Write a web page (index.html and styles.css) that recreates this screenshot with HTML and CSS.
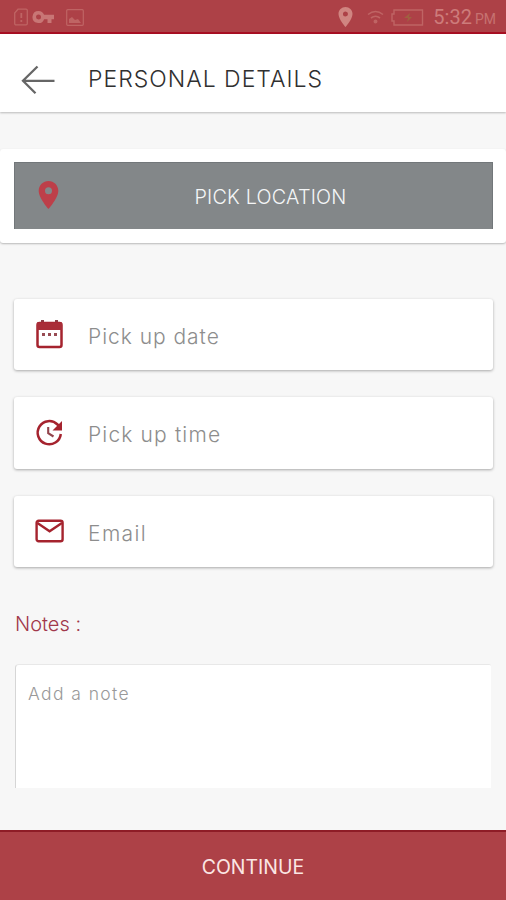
FILE: index.html
```html
<!DOCTYPE html>
<html lang="en">
<head>
<meta charset="utf-8">
<title>Personal details</title>
<link rel="stylesheet" href="styles.css">
</head>
<body>
<div class="statusbar">
  <svg class="sb-sim" width="14" height="18" viewBox="0 0 14 18" fill="none" stroke="currentColor" stroke-width="1.3"><path d="M4 1.2h8a1.3 1.3 0 0 1 1.300 1.300v13a1.300 1.300 0 0 1-1.300 1.300H2a1.300 1.300 0 0 1-1.300-1.300V5z"/><path d="M7.300 5v5M7.300 12v2" stroke-width="1.800"/></svg>
  <svg class="sb-key" width="23" height="14" viewBox="0 0 23 14" fill="currentColor"><path fill-rule="evenodd" d="M6.500 1a6 6 0 1 0 5.600 8.200h3.400V13h4V9.200H22V4.800h-9.900A6 6 0 0 0 6.500 1zm0 3.500a2.500 2.500 0 1 1 0 5 2.500 2.500 0 0 1 0-5z"/></svg>
  <svg class="sb-image" width="18" height="17" viewBox="0 0 18 17"><rect x=".7" y=".7" width="16.600" height="15.600" rx="1" fill="none" stroke="currentColor" stroke-width="1.200"/><path d="M3 14v-4l3-2 3 3 3-1 3 4z" fill="currentColor"/></svg>
  <svg class="sb-pin" width="15" height="20" viewBox="5 2 14 20"><path fill="currentColor" d="M12 2C8.130 2 5 5.130 5 9c0 5.250 7 13 7 13s7-7.750 7-13c0-3.870-3.130-7-7-7zm0 9.500a2.500 2.500 0 1 1 0-5 2.500 2.500 0 0 1 0 5z"/></svg>
  <svg class="sb-wifi" width="17" height="14" viewBox="0 0 17 14" fill="none" stroke="currentColor" stroke-width="1.600"><path d="M1 4.500q7.500-6 15 0M4 8q4.500-3.500 9 0"/><circle cx="8.500" cy="11.500" r="1.200" fill="currentColor"/></svg>
  <svg class="sb-battery" width="33" height="17" viewBox="0 0 33 17"><path d="M3 1h28.500v15H3v-4H1V5h2z" fill="none" stroke="currentColor" stroke-width="1.400"/><path class="bolt" d="M19 4l-6 5h4l-1 4 5-5h-3z"/></svg>
  <span class="clock">5:32</span><span class="meridiem">PM</span>
</div>
<header class="appbar">
  <svg class="back" width="34" height="30" viewBox="0 0 34 30" fill="none" stroke="#666" stroke-width="2.300"><path d="M33.500 15.800H2M16.500 1.500L2 15.800l12.500 12.500"/></svg>
  <h1>PERSONAL DETAILS</h1>
</header>
<section class="location">
  <button class="pick">
    <svg class="pin" width="21" height="28" viewBox="5 2 14 20"><path fill="#bd3f49" d="M12 2C8.130 2 5 5.130 5 9c0 5.250 7 13 7 13s7-7.750 7-13c0-3.870-3.130-7-7-7zm0 9.500a2.500 2.500 0 1 1 0-5 2.500 2.500 0 0 1 0 5z"/></svg>
    <span>PICK LOCATION</span>
  </button>
</section>
<main class="fields">
  <div class="field">
    <svg width="30" height="30" viewBox="0 0 30 30"><path d="M8.500 0v4M22.500 0v4" stroke="#8b4049" stroke-width="3"/><rect x="3.500" y="3" width="24" height="24" rx="2" fill="none" stroke="#a5232e" stroke-width="2.500"/><path d="M3 2.500h25v7.500H3z" fill="#a92d38"/><path d="M8 13h3v3H8zM14 13h3v3h-3zM20 13h3v3h-3z" fill="#984b53"/></svg>
    <span class="t-date">Pick up date</span>
  </div>
  <div class="field">
    <svg width="30" height="30" viewBox="0 0 30 30" fill="none" stroke="#a5232e" stroke-width="2.500"><path d="M26.800 16A11.600 11.600 0 1 1 23.500 6.500l2 2"/><path d="M28 3v9.500h-9.500z" fill="#a5232e" stroke="none"/><path d="M14.200 9v6.200l5.300 3.300" stroke="#93444c" stroke-width="2.100"/></svg>
    <span class="t-time">Pick up time</span>
  </div>
  <div class="field">
    <svg width="30" height="30" viewBox="0 0 30 30" fill="none" stroke="#a5232e" stroke-width="2.400"><rect x="2.600" y="4.700" width="26" height="20.500" rx="2"/><path d="M3.400 7l12.200 8.200L27.900 7"/></svg>
    <span class="t-email">Email</span>
  </div>
</main>
<section class="notes">
  <h2>Notes :</h2>
  <div class="note"><span>Add a note</span></div>
</section>
<footer class="continue"><span>CONTINUE</span></footer>
</body>
</html>
```
FILE: styles.css
```css
* { box-sizing: border-box; }
body {
  margin: 0;
  width: 506px;
  height: 900px;
  display: flex;
  flex-direction: column;
  overflow: hidden;
  background: #f7f7f7;
  font-family: Inter, "Open Sans", sans-serif;
  font-weight: 300;
}
span, h1, h2 { white-space: nowrap; }
.statusbar {
  height: 34px;
  flex: none;
  display: flex;
  align-items: center;
  padding: 2px 10px 0 14px;
  background: #ad4147;
  border-bottom: 2px solid #a80f22;
  color: #bf6464;
}
.sb-key { margin-left: 4px; color: #c87675; }
.sb-image { margin-left: 11px; }
.sb-pin { margin-left: auto; color: #d08581; }
.sb-wifi { margin-left: 14px; }
.sb-battery { margin-left: 7px; }
.bolt { fill: #a06040; }
.clock { margin-left: 9px; font: 400 20px Roboto, sans-serif; color: #cd7c7b; }
.meridiem { margin: 4px 0 0 3px; font: 400 14px Roboto, sans-serif; color: #c67271; }
.appbar {
  height: 78px;
  flex: none;
  display: flex;
  align-items: center;
  padding: 12px 21px 0;
  background: #fff;
  box-shadow: 0 1px 2px rgba(0,0,0,.25);
}
.back { position: relative; top: 1px; }
h1 { margin: 0 0 0 33px; font-size: 23px; font-weight: 300; letter-spacing: 1px; color: #303030; }
.location {
  height: 94px;
  flex: none;
  margin-top: 37px;
  padding: 13px 13px 14px 14px;
  background: #fff;
  border-radius: 3px;
  box-shadow: 0 1px 2px rgba(0,0,0,.25);
}
.pick {
  width: 100%;
  height: 67px;
  display: grid;
  grid-template-columns: 67px 1fr 33px;
  align-items: center;
  padding: 0;
  border: 1px solid #72777a;
  border-width: 1px 1px 0 1px;
  background: #838789;
  color: #f4f6f7;
  font: 300 19.800px Inter, "Open Sans", sans-serif;
  letter-spacing: .2px;
}
.pick span { padding-top: 1px; }
.pin { justify-self: center; position: relative; top: -1px; }
.fields { display: grid; gap: 27px; margin: 56px 13px 0 14px; }
.field {
  height: 71.300px;
  display: flex;
  align-items: center;
  gap: 24px;
  padding: 0 20px;
  background: #fff;
  border-radius: 3px;
  box-shadow: 0 1px 3px rgba(0,0,0,.32);
  font-size: 21px;
  color: #8d8d8d;
}
.field span { padding-top: 4px; }
.t-date { letter-spacing: .97px; }
.t-time { letter-spacing: 1.150px; }
.t-email { letter-spacing: 1.400px; }
.notes { margin: 44px 15px 0 15px; }
h2 { margin: 0; height: 26px; line-height: 26px; font-size: 20px; font-weight: 300; color: #a1384b; }
.note {
  height: 124px;
  margin-top: 27px;
  padding: 18px 12px;
  background: #fff;
  border-top: 1px solid #e8e8e8;
  border-left: 1px solid #d6d6d6;
  border-radius: 4px 2px 0 0;
  font-size: 17.500px;
  line-height: 22px;
  letter-spacing: 1.400px;
  color: #999;
}
.continue {
  height: 70px;
  flex: none;
  margin-top: auto;
  display: flex;
  align-items: center;
  justify-content: center;
  padding-top: 2px;
  background: #ad4147;
  border-top: 2px solid #8e1c26;
  color: #fbe6e4;
  font-size: 19.500px;
  font-weight: 400;
}
```
